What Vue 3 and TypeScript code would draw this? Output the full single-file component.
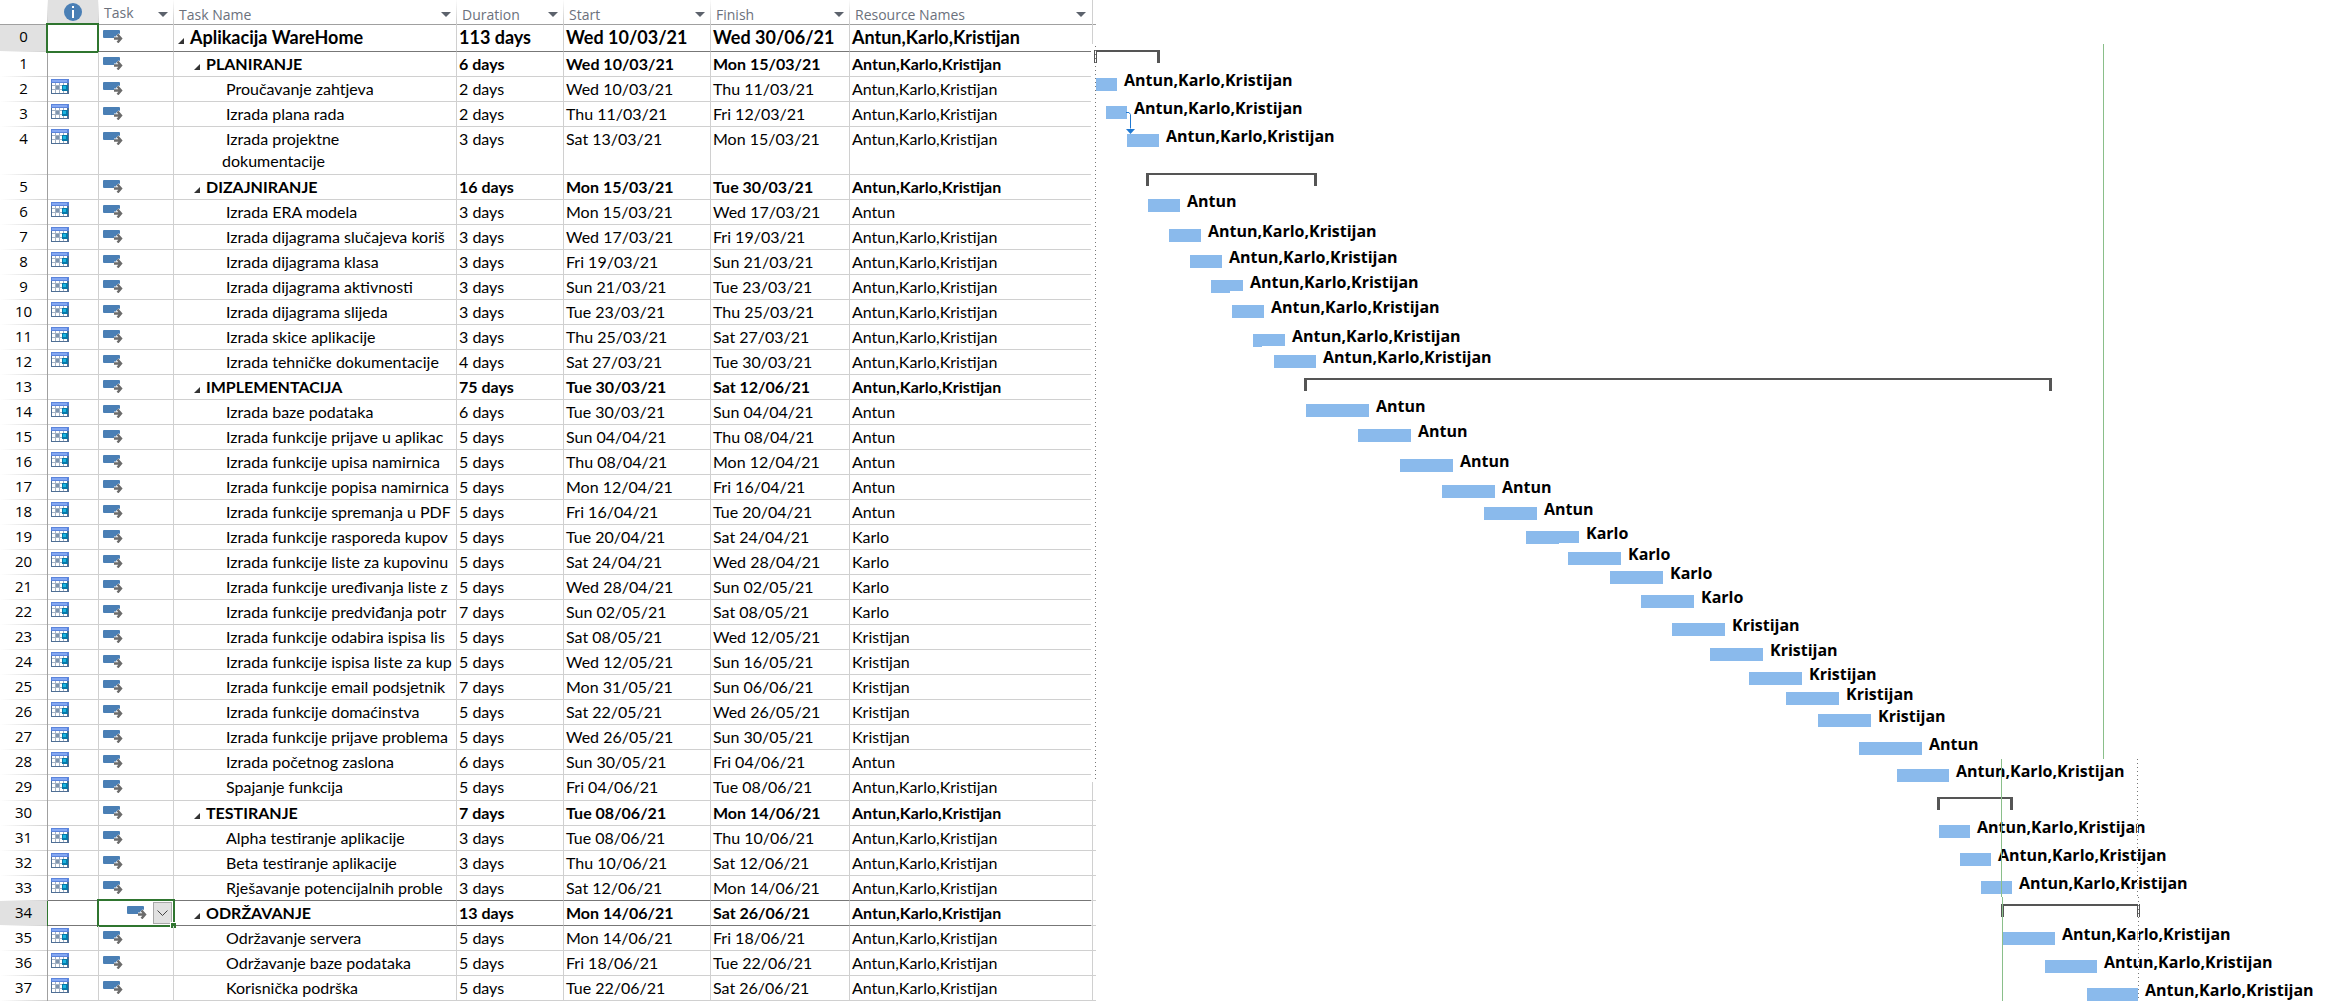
<script setup lang="ts">
interface Task {
  id: number
  name: string
  days: number
  start: string
  finish: string
  who: string
  level: 0 | 1 | 2
}
interface Bar {
  x: number
  y: number
  w: number
  who: string
  notch?: number
  notchDepth?: number
}

const ALL = 'Antun,Karlo,Kristijan'
const source: [string, number, string, string, string, (0 | 1 | 2)?][] = [
  ['Aplikacija WareHome', 113, 'Wed 10/03/21', 'Wed 30/06/21', ALL, 0],
  ['PLANIRANJE', 6, 'Wed 10/03/21', 'Mon 15/03/21', ALL, 1],
  ['Proučavanje zahtjeva', 2, 'Wed 10/03/21', 'Thu 11/03/21', ALL],
  ['Izrada plana rada', 2, 'Thu 11/03/21', 'Fri 12/03/21', ALL],
  ['Izrada projektne dokumentacije', 3, 'Sat 13/03/21', 'Mon 15/03/21', ALL],
  ['DIZAJNIRANJE', 16, 'Mon 15/03/21', 'Tue 30/03/21', ALL, 1],
  ['Izrada ERA modela', 3, 'Mon 15/03/21', 'Wed 17/03/21', 'Antun'],
  ['Izrada dijagrama slučajeva koriš', 3, 'Wed 17/03/21', 'Fri 19/03/21', ALL],
  ['Izrada dijagrama klasa', 3, 'Fri 19/03/21', 'Sun 21/03/21', ALL],
  ['Izrada dijagrama aktivnosti', 3, 'Sun 21/03/21', 'Tue 23/03/21', ALL],
  ['Izrada dijagrama slijeda', 3, 'Tue 23/03/21', 'Thu 25/03/21', ALL],
  ['Izrada skice aplikacije', 3, 'Thu 25/03/21', 'Sat 27/03/21', ALL],
  ['Izrada tehničke dokumentacije', 4, 'Sat 27/03/21', 'Tue 30/03/21', ALL],
  ['IMPLEMENTACIJA', 75, 'Tue 30/03/21', 'Sat 12/06/21', ALL, 1],
  ['Izrada baze podataka', 6, 'Tue 30/03/21', 'Sun 04/04/21', 'Antun'],
  ['Izrada funkcije prijave u aplikac', 5, 'Sun 04/04/21', 'Thu 08/04/21', 'Antun'],
  ['Izrada funkcije upisa namirnica', 5, 'Thu 08/04/21', 'Mon 12/04/21', 'Antun'],
  ['Izrada funkcije popisa namirnica', 5, 'Mon 12/04/21', 'Fri 16/04/21', 'Antun'],
  ['Izrada funkcije spremanja u PDF', 5, 'Fri 16/04/21', 'Tue 20/04/21', 'Antun'],
  ['Izrada funkcije rasporeda kupov', 5, 'Tue 20/04/21', 'Sat 24/04/21', 'Karlo'],
  ['Izrada funkcije liste za kupovinu', 5, 'Sat 24/04/21', 'Wed 28/04/21', 'Karlo'],
  ['Izrada funkcije uređivanja liste z', 5, 'Wed 28/04/21', 'Sun 02/05/21', 'Karlo'],
  ['Izrada funkcije predviđanja potr', 7, 'Sun 02/05/21', 'Sat 08/05/21', 'Karlo'],
  ['Izrada funkcije odabira ispisa lis', 5, 'Sat 08/05/21', 'Wed 12/05/21', 'Kristijan'],
  ['Izrada funkcije ispisa liste za kup', 5, 'Wed 12/05/21', 'Sun 16/05/21', 'Kristijan'],
  ['Izrada funkcije email podsjetnik', 7, 'Mon 31/05/21', 'Sun 06/06/21', 'Kristijan'],
  ['Izrada funkcije domaćinstva', 5, 'Sat 22/05/21', 'Wed 26/05/21', 'Kristijan'],
  ['Izrada funkcije prijave problema', 5, 'Wed 26/05/21', 'Sun 30/05/21', 'Kristijan'],
  ['Izrada početnog zaslona', 6, 'Sun 30/05/21', 'Fri 04/06/21', 'Antun'],
  ['Spajanje funkcija', 5, 'Fri 04/06/21', 'Tue 08/06/21', ALL],
  ['TESTIRANJE', 7, 'Tue 08/06/21', 'Mon 14/06/21', ALL, 1],
  ['Alpha testiranje aplikacije', 3, 'Tue 08/06/21', 'Thu 10/06/21', ALL],
  ['Beta testiranje aplikacije', 3, 'Thu 10/06/21', 'Sat 12/06/21', ALL],
  ['Rješavanje potencijalnih proble', 3, 'Sat 12/06/21', 'Mon 14/06/21', ALL],
  ['ODRŽAVANJE', 13, 'Mon 14/06/21', 'Sat 26/06/21', ALL, 1],
  ['Održavanje servera', 5, 'Mon 14/06/21', 'Fri 18/06/21', ALL],
  ['Održavanje baze podataka', 5, 'Fri 18/06/21', 'Tue 22/06/21', ALL],
  ['Korisnička podrška', 5, 'Tue 22/06/21', 'Sat 26/06/21', ALL],
]
const tasks: Task[] = source.map(([name, days, start, finish, who, level = 2], id) => ({
  id, name, days, start, finish, who, level,
}))

const columns = ['Duration', 'Start', 'Finish', 'Resource Names']

/* Chart units: the time scale spans 1245 units across the pane. */
const SPAN = 1245
const bars: Bar[] = [
  { x: 5, y: 78, w: 21, who: ALL },
  { x: 15, y: 106, w: 21, who: ALL },
  { x: 36, y: 134, w: 32, who: ALL },
  { x: 57, y: 199, w: 32, who: 'Antun' },
  { x: 78, y: 229, w: 32, who: ALL },
  { x: 99, y: 255, w: 32, who: ALL },
  { x: 120, y: 280, w: 32, who: ALL, notch: 13, notchDepth: 2 },
  { x: 141, y: 305, w: 32, who: ALL },
  { x: 162, y: 334, w: 32, who: ALL, notch: 23, notchDepth: 1 },
  { x: 183, y: 355, w: 42, who: ALL },
  { x: 215, y: 404, w: 63, who: 'Antun' },
  { x: 267, y: 429, w: 53, who: 'Antun' },
  { x: 309, y: 459, w: 53, who: 'Antun' },
  { x: 351, y: 485, w: 53, who: 'Antun' },
  { x: 393, y: 507, w: 53, who: 'Antun' },
  { x: 435, y: 531, w: 53, who: 'Karlo', notch: 20, notchDepth: 1 },
  { x: 477, y: 552, w: 53, who: 'Karlo' },
  { x: 519, y: 571, w: 53, who: 'Karlo' },
  { x: 550, y: 595, w: 53, who: 'Karlo' },
  { x: 581, y: 623, w: 53, who: 'Kristijan' },
  { x: 619, y: 648, w: 53, who: 'Kristijan' },
  { x: 658, y: 672, w: 53, who: 'Kristijan' },
  { x: 695, y: 692, w: 53, who: 'Kristijan' },
  { x: 727, y: 714, w: 53, who: 'Kristijan' },
  { x: 768, y: 742, w: 63, who: 'Antun' },
  { x: 806, y: 769, w: 52, who: ALL },
  { x: 848, y: 825, w: 31, who: ALL },
  { x: 869, y: 853, w: 31, who: ALL },
  { x: 890, y: 881, w: 31, who: ALL },
  { x: 912, y: 932, w: 52, who: ALL },
  { x: 954, y: 960, w: 52, who: ALL },
  { x: 996, y: 988, w: 51, who: ALL },
]
const summaries = [
  { x: 3, y: 50, w: 66 },
  { x: 55, y: 173, w: 171 },
  { x: 213, y: 378, w: 748 },
  { x: 846, y: 797, w: 76 },
  { x: 910, y: 904, w: 139 },
]
const guides = [
  { kind: 'edge', x: 1, y: 0, h: 44 },
  { kind: 'edge', x: 1, y: 782, h: 220 },
  { kind: 'dots', x: 4, y: 46, h: 734 },
  { kind: 'today', x: 1012, y: 44, h: 715 },
  { kind: 'today', x: 910, y: 759, h: 138 },
  { kind: 'today', x: 911, y: 897, h: 105 },
  { kind: 'dots', x: 1046, y: 759, h: 138 },
  { kind: 'dots', x: 1047, y: 897, h: 105 },
]
const stubs = [24, 800, 825, 850, 875, 900, 925, 950, 975, 1000]

const pct = (n: number) => `${(n / SPAN) * 100}%`
const place = (o: { x: number; y: number; w?: number }) => ({
  left: pct(o.x),
  top: `${o.y}px`,
  width: o.w === undefined ? undefined : pct(o.w),
})
</script>

<template>
  <main class="project">
    <section class="sheet" aria-label="Task sheet">
      <table>
        <colgroup>
          <col class="c-id" /><col class="c-info" /><col class="c-mode" /><col class="c-name" />
          <col class="c-dur" /><col class="c-start" /><col class="c-finish" /><col class="c-res" />
        </colgroup>
        <thead>
          <tr>
            <th class="corner"></th>
            <th class="info">
              <svg width="18" height="18" viewBox="0 0 18 18" role="img" aria-label="Indicators">
                <circle cx="9" cy="9" r="9" fill="#4a7fb5" />
                <rect x="8" y="3" width="2" height="2" fill="#fff" />
                <rect x="8" y="7" width="2" height="8" fill="#fff" />
              </svg>
            </th>
            <th class="mode"><div class="head"><span>Task</span><button class="filter" aria-label="Filter task mode"></button></div></th>
            <th><div class="head"><span>Task Name</span><button class="filter" aria-label="Filter task name"></button></div></th>
            <th v-for="c in columns" :key="c">
              <div class="head"><span>{{ c }}</span><button class="filter" :aria-label="`Filter ${c}`"></button></div>
            </th>
          </tr>
        </thead>
        <tbody>
          <tr v-for="t in tasks" :key="t.id" :class="['l' + t.level, { tall: t.id === 4, roomy: t.id === 29, picked: t.id === 34, before: t.id === 33 }]">
            <th scope="row" class="id">{{ t.id }}</th>
            <td class="info">
              <svg v-if="t.level === 2" class="cal" width="18" height="15" viewBox="0 0 18 15" shape-rendering="crispEdges" aria-hidden="true">
                <rect width="18" height="15" fill="#4f6f95" />
                <rect width="18" height="4" fill="#5b84dc" />
                <rect x="1" y="1" width="15" height="2" fill="#85a8f2" />
                <rect x="1" y="4" width="15" height="10" fill="#fff" />
                <path d="M1 6.500h15M1 10.500h15M4.500 4v10M8.500 4v10M12.500 4v10" stroke="#a3b2c4" fill="none" />
                <rect x="5" y="7" width="3" height="3" fill="#7f95ae" />
                <rect x="11" y="6" width="6" height="6" fill="#0878a8" />
                <rect x="12" y="7" width="3" height="3" fill="#19b5e0" />
              </svg>
              <span v-if="t.id === 0" class="cursor"></span>
            </td>
            <td class="mode">
              <div class="mode-box">
                <svg width="20" height="13" viewBox="0 0 20 13" aria-hidden="true">
                  <rect width="17" height="8" rx="1" fill="#4a7fb5" />
                  <path d="M11 8.500h7M14.500 4.500l3.500 4-3.500 4" fill="none" stroke="#fff" stroke-width="4" />
                  <path d="M11 8.500h7M14.500 4.500l3.500 4-3.500 4" fill="none" stroke="#6b6b6b" stroke-width="2.400" />
                </svg>
                <button v-if="t.id === 34" class="pick" aria-label="Choose task mode">
                  <svg width="11" height="6" viewBox="0 0 11 6"><path d="M.5.5l5 5 5-5" fill="none" stroke="#444" /></svg>
                </button>
              </div>
              <span v-if="t.id === 34" class="cursor handle"></span>
            </td>
            <td class="name">
              <div class="name-box">
                <svg v-if="t.level < 2" class="fold" width="6" height="6" viewBox="0 0 6 6" aria-hidden="true"><path d="M6 0v6H0z" fill="#333" /></svg>
                <span>{{ t.name }}</span>
              </div>
            </td>
            <td>{{ t.days }} days</td>
            <td>{{ t.start }}</td>
            <td>{{ t.finish }}</td>
            <td class="res">{{ t.who }}</td>
          </tr>
        </tbody>
      </table>
    </section>

    <section class="chart" aria-label="Gantt chart">
      <i v-for="y in stubs" :key="y" class="stub" :class="{ first: y === 24 }" :style="{ top: y + 'px' }"></i>
      <i v-for="(s, i) in summaries" :key="'s' + i" class="summary" :style="place(s)"></i>
      <div v-for="(b, i) in bars" :key="i" class="bar" :style="place(b)">
        <i v-if="b.notch" class="notch" :style="{ width: b.notch + 'px', height: b.notchDepth + 'px' }"></i>
        <span class="label">{{ b.who }}</span>
      </div>
      <svg class="link" :style="place({ x: 35, y: 112 })" width="9" height="22" viewBox="0 0 9 22" aria-hidden="true">
        <path d="M0 .5h3l1.500 2v14" fill="none" stroke="#1f78d1" />
        <path d="M0 17h9l-4.500 5z" fill="#1f78d1" />
      </svg>
      <i v-for="(g, i) in guides" :key="'g' + i" :class="['guide', g.kind]" :style="{ left: pct(g.x), top: g.y + 'px', height: g.h + 'px' }"></i>
    </section>
  </main>
</template>

<style>
body {
  margin: 0;
  background: #fff;
}
</style>

<style scoped>
.project {
  display: grid;
  grid-template-columns: minmax(0, 1091fr) minmax(0, 1245fr);
  overflow: hidden;
  font-family: Lato, "Noto Sans", sans-serif;
  font-size: 16px;
  line-height: 22px;
  color: #000;
}
table {
  width: 100%;
  table-layout: fixed;
  border-collapse: separate;
  border-spacing: 0;
}
.c-id { width: 48px; }
.c-info { width: 51px; }
.c-mode { width: 75px; }
.c-dur { width: 107px; }
.c-start { width: 147px; }
.c-finish { width: 139px; }
.c-res { width: 241px; }

th,
td {
  box-sizing: border-box;
  height: 25px;
  padding: 0 2px;
  border-right: 1px solid #d0d0d0;
  border-bottom: 1px solid #d0d0d0;
  text-align: left;
  vertical-align: top;
  white-space: nowrap;
  overflow: hidden;
}
td {
  padding-top: 1px;
}
.res,
thead th:last-child {
  border-right: 0;
}

/* header */
thead th {
  padding: 0;
  border-bottom: 0;
  border-image: linear-gradient(#fff, #c8c8c8) 1;
  font-family: "Open Sans", "Noto Sans", sans-serif;
  font-size: 14px;
  font-weight: 400;
  color: #6b717c;
  background: linear-gradient(#a0a0a0, #a0a0a0) bottom / 100% 1px no-repeat border-box;
}
thead th.info {
  background-color: #e1e1e1;
}
thead th.info svg {
  display: block;
  margin: 3px auto 0;
}
.head {
  display: flex;
  align-items: center;
  justify-content: space-between;
  height: 24px;
  padding: 4px 5px 0;
  box-sizing: border-box;
}
.head span {
  padding-top: 2px;
}
.mode .head span {
  padding: 0 0 2px;
}
.filter {
  width: 10px;
  height: 10px;
  padding: 0;
  border: 0;
  background: #5c626c;
  clip-path: polygon(0 30%, 100% 30%, 50% 80%);
}

/* row numbers */
.id {
  padding: 0;
  border-right-color: #a0a0a0;
  border-bottom: 0;
  background: linear-gradient(90deg, #fff, #d0d0d0) bottom / 100% 1px no-repeat;
  font-family: "Open Sans", "Noto Sans", sans-serif;
  font-size: 15px;
  font-weight: 400;
  line-height: 22px;
  text-align: center;
}
tbody .info {
  position: relative;
  padding: 2px 3px 0;
  overflow: visible;
}
.cal,
.mode-box > svg {
  display: block;
}
tbody .mode {
  position: relative;
  padding: 5px 4px 0;
  overflow: visible;
}
.mode-box {
  display: flex;
  align-items: flex-start;
}
.name {
  padding-right: 1px;
}
.name-box {
  display: flex;
  align-items: baseline;
  gap: 6px;
  overflow: hidden;
}
.l0 .name-box { padding-left: 2px; }
.l1 .name-box { padding-left: 18px; }
.l2 .name-box { padding-left: 50px; }
.fold {
  flex: none;
  margin-bottom: 3px;
}

.l0 td,
.l1 td {
  font-weight: 700;
}
.l0 td,
.l0 .id {
  height: 27px;
  border-bottom-color: #777;
}
.l0 td {
  font-size: 18px;
}
.l0 .id,
.picked .id {
  background-color: #e1e1e1;
}
.tall td {
  height: 48px;
}
.tall .name-box {
  padding-left: 46px;
  white-space: normal;
}
.tall .name-box span {
  width: 160px;
  text-indent: 4px;
}
.roomy td {
  height: 26px;
}
.before td,
.picked td {
  border-bottom-color: #777;
}
.picked .id {
  border-right-color: #2f752f;
}

/* selection frames over the grid lines */
.cursor {
  position: absolute;
  inset: -2px -1px -2px -2px;
  border: 2px solid #2f752f;
  pointer-events: none;
}
.handle {
  right: -2px;
}
.handle::after {
  content: "";
  position: absolute;
  right: -3px;
  bottom: -3px;
  width: 5px;
  height: 5px;
  background: #2f752f;
  border: 1px solid #fff;
  border-width: 1px 0 0 1px;
}
.picked .mode-box {
  justify-content: flex-end;
  gap: 6px;
  height: 19px;
}
.picked .mode {
  padding-right: 1px;
}
.pick {
  display: grid;
  place-items: center;
  box-sizing: border-box;
  width: 19px;
  height: 22px;
  margin-top: -4px;
  padding: 0;
  border: 1px solid #a8a8a8;
  background: #e1e1e1;
}

/* chart pane */
.chart {
  position: relative;
  font-family: "Open Sans", "Noto Sans", sans-serif;
  font-size: 16px;
  font-weight: 700;
}
.bar,
.summary,
.guide,
.stub,
.link {
  position: absolute;
}
.bar {
  height: 13px;
  background: #8abaec;
}
.label {
  position: absolute;
  left: 100%;
  bottom: 0;
  padding-left: 7px;
  white-space: nowrap;
}
.notch {
  position: absolute;
  right: 0;
  bottom: 0;
  background: #fff;
}
.summary {
  box-sizing: border-box;
  height: 13px;
  border: 3px solid #555;
  border-top-width: 2px;
  border-bottom: 0;
}
.guide {
  width: 1px;
}
.edge {
  background: #d0d0d0;
}
.today {
  background: #8abf8a;
}
.dots {
  background: repeating-linear-gradient(#777 0 1px, #fff 1px 4px);
}
.stub {
  left: 0;
  width: 5px;
  height: 1px;
  background: #d0d0d0;
}
.stub.first {
  background: #a0a0a0;
}
</style>
